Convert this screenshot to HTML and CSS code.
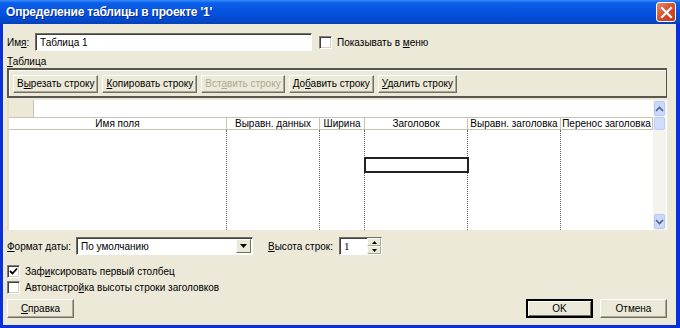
FILE: index.html
```html
<!DOCTYPE html>
<html lang="ru">
<head>
    <meta charset="UTF-8">
    <title>Определение таблицы в проекте '1'</title>
    <link rel="stylesheet" href="styles.css">
</head>
<body>
    <div class="window">
        <!-- Title bar -->
        <div class="titlebar">
            <span class="title">Определение таблицы в проекте '1'</span>
            <span class="close-btn">
                <svg width="13" height="13" viewBox="0 0 13 13">
                    <path d="M2 2 L11 11 M11 2 L2 11" stroke="#fff" stroke-width="2.2" stroke-linecap="square"/>
                </svg>
            </span>
        </div>

        <div class="dialog">
            <!-- Name row -->
            <div class="name-row">
                <label class="lbl">Им<u>я</u>:</label>
                <div class="textbox name-box">Таблица 1</div>
                <label class="check"><span class="box"></span><span>Показывать в <u>м</u>еню</span></label>
            </div>

            <div class="lbl section"><u>Т</u>аблица</div>

            <!-- Row buttons -->
            <div class="toolbar">
                <button class="btn">В<u>ы</u>резать строку</button>
                <button class="btn"><u>К</u>опировать строку</button>
                <button class="btn disabled">Вст<u>а</u>вить строку</button>
                <button class="btn">До<u>б</u>авить строку</button>
                <button class="btn"><u>У</u>далить строку</button>
            </div>

            <!-- Field grid -->
            <div class="grid">
                <div class="grid-main">
                    <div class="edit-strip">
                        <div class="corner"></div>
                    </div>
                    <div class="grid-head">
                        <div class="col c1">Имя поля</div>
                        <div class="col c2">Выравн. данных</div>
                        <div class="col c3">Ширина</div>
                        <div class="col c4">Заголовок</div>
                        <div class="col c5">Выравн. заголовка</div>
                        <div class="col c6">Перенос заголовка</div>
                    </div>
                    <div class="grid-body">
                        <div class="col c1"></div>
                        <div class="col c2"></div>
                        <div class="col c3"></div>
                        <div class="col c4"><div class="sel-cell"></div></div>
                        <div class="col c5"></div>
                        <div class="col c6"></div>
                    </div>
                </div>
                <div class="scrollbar">
                    <div class="sb-btn">
                        <svg width="9" height="6" viewBox="0 0 9 6"><path d="M1 5 L4.5 1.5 L8 5" fill="none" stroke="#4D6185" stroke-width="1.6"/></svg>
                    </div>
                    <div class="sb-thumb"></div>
                    <div class="sb-track"></div>
                    <div class="sb-btn">
                        <svg width="9" height="6" viewBox="0 0 9 6"><path d="M1 1 L4.5 4.5 L8 1" fill="none" stroke="#4D6185" stroke-width="1.6"/></svg>
                    </div>
                </div>
            </div>

            <!-- Format / height row -->
            <div class="format-row">
                <label class="lbl"><u>Ф</u>ормат даты:</label>
                <div class="textbox combo">
                    <span>По умолчанию</span>
                    <span class="drop">
                        <svg width="7" height="4" viewBox="0 0 7 4"><path d="M0 0 H7 L3.5 4 Z" fill="#000"/></svg>
                    </span>
                </div>
                <label class="lbl height-lbl"><u>В</u>ысота строк:</label>
                <div class="textbox spin">
                    <span class="spin-val">1</span>
                    <span class="spin-btns">
                        <span class="spin-btn"><svg width="5" height="3" viewBox="0 0 5 3"><path d="M0 3 L2.5 0 L5 3 Z" fill="#000"/></svg></span>
                        <span class="spin-btn"><svg width="5" height="3" viewBox="0 0 5 3"><path d="M0 0 H5 L2.5 3 Z" fill="#000"/></svg></span>
                    </span>
                </div>
            </div>

            <!-- Options -->
            <label class="check opt first">
                <span class="box">
                    <svg width="9" height="9" viewBox="0 0 9 9"><path d="M1 4 L3.5 6.5 L8 1.5" fill="none" stroke="#000" stroke-width="1.8"/></svg>
                </span><span>Заф<u>и</u>ксировать первый столбец</span>
            </label>
            <label class="check opt"><span class="box"></span><span>Автонастро<u>й</u>ка высоты строки заголовков</span></label>

            <!-- Dialog buttons -->
            <div class="footer">
                <button class="btn wide"><u>С</u>правка</button>
                <div class="footer-right">
                    <button class="btn wide default">OK</button>
                    <button class="btn wide">Отмена</button>
                </div>
            </div>
        </div>
    </div>
</body>
</html>
```

FILE: styles.css
```css
/* General */
* {
    margin: 0;
    padding: 0;
    box-sizing: border-box;
}

body {
    width: 680px;
    height: 328px;
    overflow: hidden;
    font-family: "Liberation Sans", Arial, sans-serif;
    font-size: 10px;
    color: #000;
    background: #ECE9D8;
}

/* Window frame */
.window {
    width: 680px;
    height: 328px;
    display: flex;
    flex-direction: column;
    border-left: 3px solid #0831D9;
    border-right: 4px solid #0831D9;
    border-bottom: 3px solid #0831D9;
    background: #ECE9D8;
}

.titlebar {
    height: 24px;
    margin: 0 -4px 0 -3px;
    display: flex;
    align-items: center;
    justify-content: space-between;
    padding: 0 4px 0 6px;
    background: linear-gradient(to bottom, #3A8CFF 0%, #0A5FE8 12%, #0450DD 60%, #0447C8 90%, #0A3FB0 100%);
}

.title {
    color: #fff;
    font-family: "Liberation Sans", Arial, sans-serif;
    font-weight: bold;
    font-size: 12px;
    letter-spacing: -0.2px;
    text-shadow: 1px 1px 0 #0A2A8A;
}

.close-btn {
    width: 20px;
    height: 20px;
    border: 1px solid #fff;
    border-radius: 3px;
    background: linear-gradient(to bottom right, #E88A6E, #D4502E 50%, #C23A1A);
    display: flex;
    align-items: center;
    justify-content: center;
}

/* Dialog body */
.dialog {
    flex: 1;
    display: flex;
    flex-direction: column;
    padding: 9px 9px 0 4px;
}

.lbl {
    white-space: nowrap;
}

.name-row {
    display: flex;
    align-items: center;
    height: 18px;
}

.name-row .lbl {
    width: 28px;
}

.textbox {
    height: 18px;
    background: #fff;
    border-top: 1px solid #716F64;
    border-left: 1px solid #716F64;
    border-right: 1px solid #fff;
    border-bottom: 1px solid #fff;
    box-shadow: inset 1px 1px 0 #404040;
    display: flex;
    align-items: center;
    padding-left: 4px;
}

.name-box {
    width: 277px;
}

.check {
    display: flex;
    align-items: center;
    white-space: nowrap;
}

.name-row .check {
    margin-left: 7px;
}

.box {
    width: 13px;
    height: 13px;
    background: #fff;
    border-top: 1px solid #808080;
    border-left: 1px solid #808080;
    border-right: 1px solid #fff;
    border-bottom: 1px solid #fff;
    box-shadow: inset 1px 1px 0 #404040, inset -1px -1px 0 #D4D0C8;
    margin-right: 5px;
    display: flex;
    align-items: center;
    justify-content: center;
}

.section {
    margin-top: 4px;
    height: 13px;
    line-height: 13px;
}

/* Toolbar group */
.toolbar {
    height: 30px;
    display: flex;
    align-items: center;
    gap: 4px;
    padding: 1px 0 0 4px;
    border-top: 2px solid #5A584E;
    border-left: 2px solid #5A584E;
    border-right: 1px solid #5A584E;
    border-bottom: 2px solid #5A584E;
    box-shadow: inset 1px 1px 0 #fff;
}

.btn {
    font-family: "Liberation Sans", Arial, sans-serif;
    font-size: 10px;
    height: 18px;
    padding: 0 3px;
    background: #ECE9D8;
    color: #000;
    border-top: 1px solid #fff;
    border-left: 1px solid #fff;
    border-right: 1px solid #716F64;
    border-bottom: 1px solid #716F64;
    box-shadow: inset -1px -1px 0 #ACA899;
    white-space: nowrap;
}

.btn.disabled {
    color: #ACA899;
}

/* Grid */
.grid {
    margin-top: 2px;
    height: 130px;
    display: flex;
    background: #fff;
    border-left: 2px solid #E8DEBE;
}

.grid-main {
    flex: 1;
    display: flex;
    flex-direction: column;
}

.edit-strip {
    height: 17px;
    display: flex;
}

.corner {
    width: 25px;
    background: #ECE9D8;
    border-right: 1px solid #C8C4B4;
}

.grid-head,
.grid-body {
    display: flex;
}

.grid-head {
    height: 13px;
    border-top: 1px solid #C8C4B4;
    border-bottom: 1px solid #C8C4B4;
}

.grid-head .col {
    text-align: center;
    line-height: 11px;
    border-right: 1px solid #C8C4B4;
    white-space: nowrap;
    overflow: hidden;
}

.grid-body {
    flex: 1;
}

.grid-body .col {
    border-right: 1px dotted #666;
    position: relative;
}

.grid-body .c6 {
    border-right: none;
}

.c1 { width: 218px; }
.c2 { width: 93px; }
.c3 { width: 45px; }
.c4 { width: 103px; }
.c5 { width: 93px; }
.c6 { width: 92px; }

/* Active cell outline */
.sel-cell {
    position: absolute;
    left: -1px;
    right: -2px;
    top: 27px;
    height: 16px;
    border: 2px solid #222;
}

.scrollbar {
    width: 15px;
    margin-right: 1px;
    display: flex;
    flex-direction: column;
    background: #F4F3EE;
}

.sb-btn {
    height: 15px;
    margin: 1px;
    border-radius: 2px;
    background: #C9D8FC;
    border: 1px solid #B4C8F6;
    display: flex;
    align-items: center;
    justify-content: center;
}

.sb-thumb {
    height: 13px;
    margin: 0 1px;
    border-radius: 2px;
    background: #CFDCFC;
    border: 1px solid #BACDF7;
}

.sb-track {
    flex: 1;
}

/* Format row */
.format-row {
    margin-top: 7px;
    display: flex;
    align-items: center;
    height: 18px;
}

.format-row .lbl {
    width: 69px;
}

.combo {
    width: 177px;
    justify-content: space-between;
    padding-right: 1px;
}

.drop {
    width: 15px;
    height: 14px;
    background: #ECE9D8;
    border-top: 1px solid #fff;
    border-left: 1px solid #fff;
    border-right: 1px solid #716F64;
    border-bottom: 1px solid #716F64;
    display: flex;
    align-items: center;
    justify-content: center;
}

.format-row .height-lbl {
    margin-left: 15px;
    width: 71px;
}

.spin {
    width: 43px;
    justify-content: space-between;
    padding-right: 0;
}

.spin-val {
    font-family: "Liberation Serif", serif;
    font-size: 11px;
}

.spin-btns {
    width: 14px;
    height: 16px;
    display: flex;
    flex-direction: column;
    background: #ECE9D8;
}

.spin-btn {
    flex: 1;
    display: flex;
    align-items: center;
    justify-content: center;
    border-top: 1px solid #fff;
    border-left: 1px solid #fff;
    border-right: 1px solid #ACA899;
    border-bottom: 1px solid #ACA899;
}

/* Options */
.opt {
    height: 14px;
    margin-top: 2px;
}

.opt.first {
    margin-top: 9px;
}

/* Footer buttons */
.footer {
    margin-top: 5px;
    display: flex;
    justify-content: space-between;
}

.footer-right {
    display: flex;
    gap: 7px;
}

.btn.wide {
    width: 67px;
    height: 19px;
}

.btn.default {
    border: 2px solid #000;
    box-shadow: inset 1px 1px 0 #fff, inset -1px -1px 0 #716F64;
}
```
